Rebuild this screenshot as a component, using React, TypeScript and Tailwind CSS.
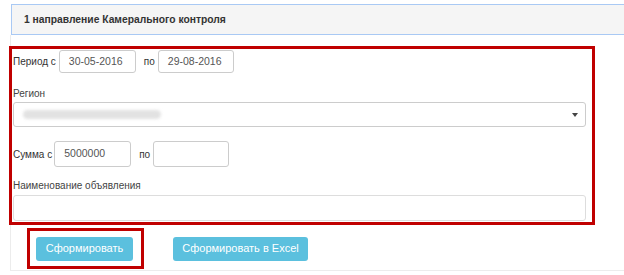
import React from "react";

const inputBox =
  "h-full border border-[#ccc] rounded-[3px] bg-white flex items-center px-[9px] whitespace-nowrap text-[10.5px] text-[#555]";

export default function App() {
  return (
    <div className="w-[624px] h-[275px] overflow-hidden bg-white font-['Liberation_Sans',Arial,sans-serif]">
      <div className="ml-[11px] mt-[4px] h-[31px] w-[640px] border border-[#a9c9f4] bg-[#f5f5f5] flex items-center pl-[12px] text-[10.3px] font-bold text-[#333]">
        1 направление Камерального контроля
      </div>

      <div className="ml-[10px] w-[640px] h-[236px] border-l border-b border-[#ececec] pt-[11px]">
        {/* form, outlined in red */}
        <div className="-ml-[2px] w-[586px] h-[179px] border-[3px] border-[#c00000] pl-[1px] pr-[6px] flex flex-col">
          <div className="flex items-center h-[23px] mt-[1px] text-[10px] text-[#333]">
            <span>Период с</span>
            <div className={`${inputBox} ml-[3px] w-[77px]`}>30-05-2016</div>
            <span className="ml-[8px]">по</span>
            <div className={`${inputBox} ml-[3px] w-[76px]`}>29-08-2016</div>
          </div>

          <div className="mt-[14px] text-[10px] leading-[13px] text-[#444]">Регион</div>
          <div className="mt-[2px] h-[25px] border border-[#ccc] rounded-[3px] bg-white flex items-center px-[9px]">
            <div className="w-[138px] h-[9px] rounded-full bg-[#e2e2e2] blur-[1.5px]" />
            <div className="ml-auto mr-[-2px] w-0 h-0 border-l-[3px] border-r-[3px] border-t-[4px] border-l-transparent border-r-transparent border-t-[#444]" />
          </div>

          <div className="flex items-center h-[26px] mt-[14px] text-[10px] text-[#333]">
            <span>Сумма с</span>
            <div className={`${inputBox} ml-[2px] w-[77px]`}>5000000</div>
            <span className="ml-[8px]">по</span>
            <div className={`${inputBox} ml-[3px] w-[76px]`} />
          </div>

          <div className="mt-[12px] text-[10px] leading-[13px] text-[#444]">Наименование объявления</div>
          <div className="mt-[3px] h-[26px] border border-[#ddd] rounded-[3px] bg-white" />
        </div>

        <div className="flex items-center mt-[3px]">
          <div className="ml-[16px] w-[117px] h-[41px] border-[3px] border-[#c00000] flex items-center pl-[6px]">
            <button className="w-[97px] h-[24px] rounded-[3px] bg-[#5bc0de] text-white text-[11px]">
              Сформировать
            </button>
          </div>
          <button className="ml-[29px] w-[135px] h-[24px] rounded-[3px] bg-[#5bc0de] text-white text-[11px]">
            Сформировать в Excel
          </button>
        </div>
      </div>
    </div>
  );
}
